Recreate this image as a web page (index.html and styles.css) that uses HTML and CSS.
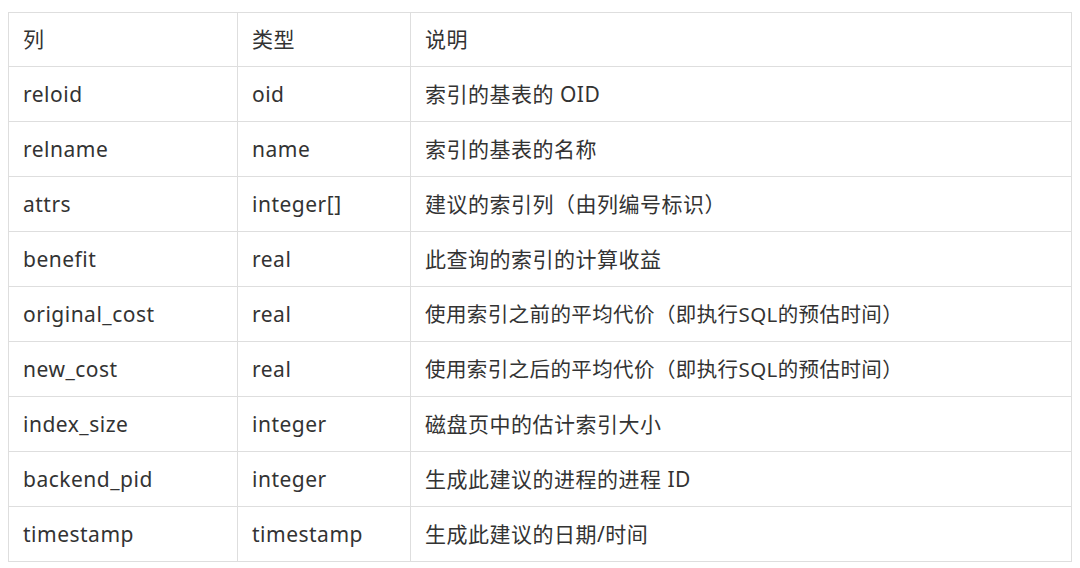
FILE: index.html
```html
<!DOCTYPE html>
<html lang="zh-CN">
<head>
<meta charset="utf-8">
<title>index advice</title>
<link rel="stylesheet" href="styles.css">
</head>
<body>
<table class="spec">
  <colgroup>
    <col class="c1"><col class="c2"><col class="c3">
  </colgroup>
  <thead>
    <tr><th>列</th><th>类型</th><th>说明</th></tr>
  </thead>
  <tbody>
    <tr><td>reloid</td><td>oid</td><td>索引的基表的 OID</td></tr>
    <tr><td>relname</td><td>name</td><td>索引的基表的名称</td></tr>
    <tr><td>attrs</td><td>integer[]</td><td>建议的索引列（由列编号标识）</td></tr>
    <tr><td>benefit</td><td>real</td><td>此查询的索引的计算收益</td></tr>
    <tr><td>original_cost</td><td>real</td><td class="small">使用索引之前的平均代价（即执行SQL的预估时间）</td></tr>
    <tr><td>new_cost</td><td>real</td><td class="small">使用索引之后的平均代价（即执行SQL的预估时间）</td></tr>
    <tr><td>index_size</td><td>integer</td><td>磁盘页中的估计索引大小</td></tr>
    <tr><td>backend_pid</td><td>integer</td><td>生成此建议的进程的进程 ID</td></tr>
    <tr><td>timestamp</td><td>timestamp</td><td>生成此建议的日期/时间</td></tr>
  </tbody>
</table>
</body>
</html>
```
FILE: styles.css
```css
html, body {
  background: #ffffff;
}
body {
  margin: 12px 8px;
  font-family: "Noto Sans", "Noto Sans CJK SC", sans-serif;
  color: #333333;
}
.spec {
  border-collapse: collapse;
  width: 1064px;
  table-layout: fixed;
  border: 1px solid #dcdcdc;
}
.c1 { width: 229px; }
.c2 { width: 173px; }
.spec th,
.spec td {
  border: 1px solid #dedede;
  padding: 0 14px;
  text-align: left;
  font-weight: normal;
  font-size: 21px;
  line-height: 54px;
  white-space: nowrap;
  letter-spacing: 0.5px;
}
.spec th {
  line-height: 53px;
}
.spec td.small {
  font-size: 20.5px;
  letter-spacing: 0.4px;
}
```
